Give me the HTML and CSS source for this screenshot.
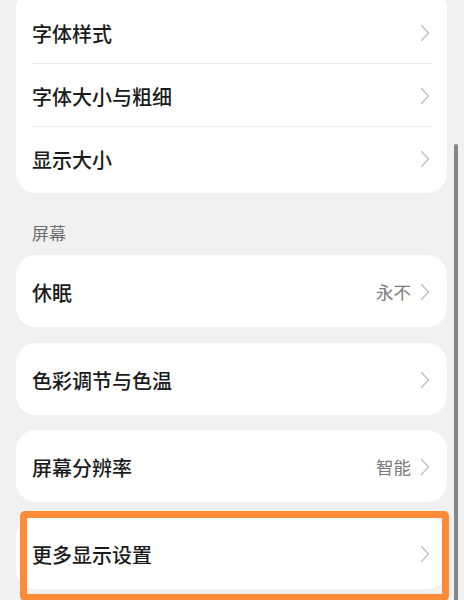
FILE: index.html
```html
<!DOCTYPE html>
<html lang="zh-CN">
<head>
<meta charset="utf-8">
<link rel="stylesheet" href="styles.css">
</head>
<body>
<div class="page">
  <div class="card card-top">
    <div class="row"><span class="label">字体样式</span><span class="right"><svg class="chev" viewBox="0 0 10 18"><polyline points="1.5,1.5 8.5,9 1.5,16.5"/></svg></span></div>
    <div class="divider"></div>
    <div class="row"><span class="label">字体大小与粗细</span><span class="right"><svg class="chev" viewBox="0 0 10 18"><polyline points="1.5,1.5 8.5,9 1.5,16.5"/></svg></span></div>
    <div class="divider"></div>
    <div class="row"><span class="label">显示大小</span><span class="right"><svg class="chev" viewBox="0 0 10 18"><polyline points="1.5,1.5 8.5,9 1.5,16.5"/></svg></span></div>
  </div>

  <div class="section">屏幕</div>

  <div class="card single">
    <div class="row tall"><span class="label">休眠</span><span class="right"><span class="value">永不</span><svg class="chev" viewBox="0 0 10 18"><polyline points="1.5,1.5 8.5,9 1.5,16.5"/></svg></span></div>
  </div>
  <div class="card single gap16">
    <div class="row tall"><span class="label">色彩调节与色温</span><span class="right"><svg class="chev" viewBox="0 0 10 18"><polyline points="1.5,1.5 8.5,9 1.5,16.5"/></svg></span></div>
  </div>
  <div class="card single gap15">
    <div class="row tall"><span class="label">屏幕分辨率</span><span class="right"><span class="value">智能</span><svg class="chev" viewBox="0 0 10 18"><polyline points="1.5,1.5 8.5,9 1.5,16.5"/></svg></span></div>
  </div>
  <div class="card single gap15 highlighted">
    <div class="row tall"><span class="label">更多显示设置</span><span class="right"><svg class="chev" viewBox="0 0 10 18"><polyline points="1.5,1.5 8.5,9 1.5,16.5"/></svg></span></div>
    <div class="mark"></div>
  </div>
</div>
<div class="scrollbar"></div>
</body>
</html>
```

FILE: styles.css
```css
html, body {
  margin: 0;
  padding: 0;
  background: #f1f1f1;
  overflow: hidden;
  height: 600px;
}
body {
  font-family: "Noto Sans CJK SC", "Noto Sans", sans-serif;
  position: relative;
}
.page {
  padding: 0 17px 0 16px;
}
.card {
  background: #ffffff;
  border-radius: 20px;
}
.card-top {
  margin-top: -11px;
  padding: 12px 0 4px;
}
.row {
  height: 62px;
  display: flex;
  align-items: center;
  justify-content: space-between;
  padding: 0 17px 0 16px;
}
.row.tall {
  height: 72px;
}
.label {
  font-size: 20px;
  font-weight: 500;
  color: #1b1b1b;
  padding-top: 3px;
  line-height: 24px;
}
.right {
  display: flex;
  align-items: center;
  gap: 9px;
}
.value {
  font-size: 17.5px;
  color: #7a7a7a;
  line-height: 22px;
  padding-top: 2px;
}
.chev {
  width: 10px;
  height: 18px;
  fill: none;
  stroke: #c2c2c2;
  stroke-width: 1.4;
  stroke-linecap: round;
  stroke-linejoin: round;
  margin-top: 2px;
}
.divider {
  height: 1px;
  background: #ececec;
  margin: 0 14px 0 15px;
}
.section {
  padding: 29px 0 11px 16px;
  line-height: 22px;
  font-size: 17px;
  color: #6e6e6e;
}
.gap16 { margin-top: 16px; }
.gap15 { margin-top: 15px; }
.highlighted {
  position: relative;
}
.mark {
  position: absolute;
  left: 4px;
  top: -6px;
  right: -2px;
  height: 90px;
  border: 7px solid #ff8a38;
  border-radius: 5px;
  box-sizing: border-box;
}
.scrollbar {
  position: absolute;
  left: 454px;
  top: 144px;
  width: 4px;
  height: 470px;
  background: #878787;
  border-radius: 2px;
}
```
